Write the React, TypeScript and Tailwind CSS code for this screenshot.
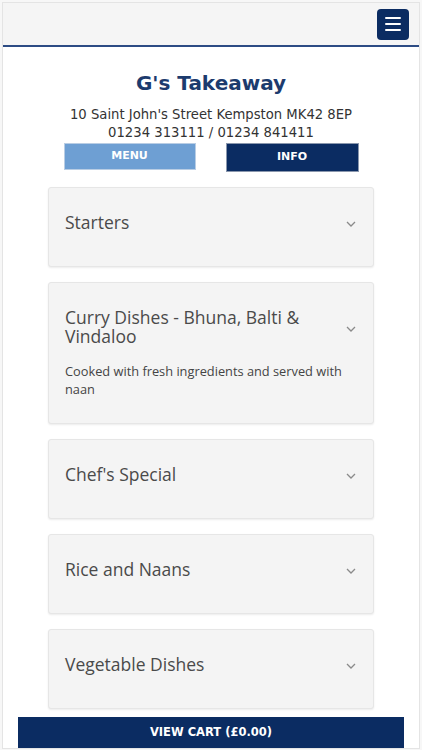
import React from 'react';

const categories = [
  { name: 'Starters' },
  {
    name: 'Curry Dishes - Bhuna, Balti & Vindaloo',
    desc: 'Cooked with fresh ingredients and served with naan',
  },
  { name: "Chef's Special" },
  { name: 'Rice and Naans' },
  { name: 'Vegetable Dishes' },
];

const Chevron: React.FC = () => (
  <svg width="10" height="6" viewBox="0 0 10 6" className="mt-[3px] shrink-0">
    <path d="M1 1l4 4 4-4" fill="none" stroke="#8a8a8a" strokeWidth="1.3" />
  </svg>
);

const App: React.FC = () => {
  return (
    <div className="h-[750px] overflow-hidden bg-[#f7f7f7] px-[2px] pt-[2px] pb-[1px]">
      <div className="flex h-full flex-col border border-[#e4e4e4] bg-white">
        {/* header */}
        <div className="flex h-[44px] shrink-0 items-center justify-end border-b-2 border-[#2d4c84] bg-[#f5f5f5] pr-[10px]">
          <button className="flex h-[31px] w-[32px] flex-col items-center justify-center gap-[4px] rounded-[4px] bg-[#0b2c62]">
            <span className="block h-[2px] w-[16px] rounded bg-white" />
            <span className="block h-[2px] w-[16px] rounded bg-white" />
            <span className="block h-[2px] w-[16px] rounded bg-white" />
          </button>
        </div>

        <div className="flex-1 overflow-hidden" style={{ fontFamily: '"DejaVu Sans", Verdana, sans-serif' }}>
          <h1 className="mt-[24px] text-center text-[20px] font-bold leading-[24px] text-[#1c3b6e]">
            G's Takeaway
          </h1>
          <p className="mt-[11px] text-center text-[13.2px] leading-[18px] text-[#333]">
            10 Saint John's Street Kempston MK42 8EP
          </p>
          <p className="text-center text-[13.2px] leading-[18px] text-[#333]">01234 313111 / 01234 841411</p>

          <div className="mt-[1px] flex justify-center gap-[30px]">
            <button className="h-[27px] w-[132px] border border-[#b9cde4] bg-[#6e9fd3] text-[11px] font-bold text-white">
              MENU
            </button>
            <button className="h-[29px] w-[133px] border border-[#8a97ad] bg-[#0b2c62] text-[11px] font-bold text-white">
              INFO
            </button>
          </div>

          <div
            className="mx-[45px] mt-[15px] flex flex-col gap-[15px]"
            style={{ fontFamily: '"Open Sans", "Noto Sans", sans-serif' }}
          >
            {categories.map((c) => (
              <div
                key={c.name}
                className="flex min-h-[80px] flex-col rounded-[3px] border border-[#e6e6e6] bg-[#f4f4f4] pt-[25px] pb-[25px] pl-[16px] pr-[17px] shadow-[0_1px_2px_rgba(0,0,0,0.08)]"
              >
                <div className="flex items-center justify-between gap-6">
                  <span className="text-[17.5px] leading-[19px] text-[#4a4a4a]">{c.name}</span>
                  <Chevron />
                </div>
                {c.desc && (
                  <p className="mt-[16px] pr-[8px] text-[12.8px] leading-[18px] text-[#444]">{c.desc}</p>
                )}
              </div>
            ))}
          </div>
        </div>

        <div className="flex shrink-0 justify-center">
          <div
            className="flex h-[31px] w-[386px] items-center justify-center bg-[#0b2c62] text-[11.5px] font-bold text-white"
            style={{ fontFamily: '"DejaVu Sans", Verdana, sans-serif' }}
          >
            VIEW CART (£0.00)
          </div>
        </div>
      </div>
    </div>
  );
};

export default App;
